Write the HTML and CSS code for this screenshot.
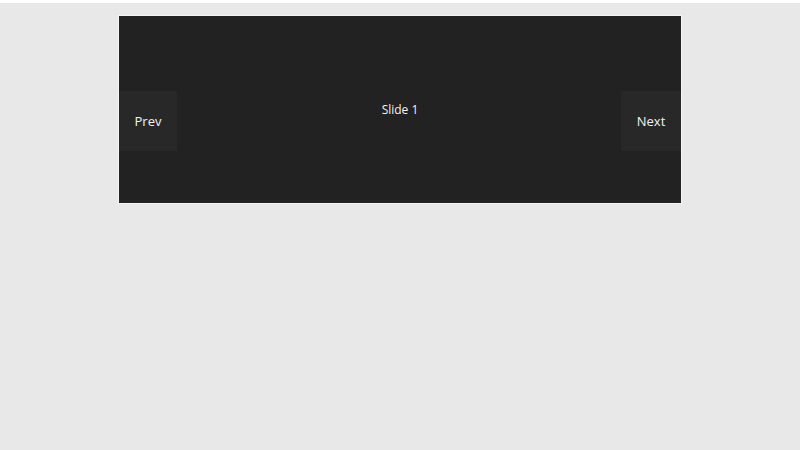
FILE: index.html
```html
<!DOCTYPE html>
<html lang="en">
<head>
<meta charset="utf-8">
<title>Carousel</title>
<link rel="stylesheet" href="styles.css">
</head>
<body>
<div class="topbar"></div>
<main class="page">
  <section class="carousel">
    <div class="slide">Slide 1</div>
    <button class="nav nav-prev" type="button">Prev</button>
    <button class="nav nav-next" type="button">Next</button>
  </section>
</main>
</body>
</html>
```
FILE: styles.css
```css
html, body {
  margin: 0;
  padding: 0;
}

body {
  background: #e8e8e8;
  font-family: "Open Sans", "Liberation Sans", sans-serif;
  height: 450px;
}

.topbar {
  height: 3px;
  background: #ffffff;
}

.page {
  display: flex;
  justify-content: center;
  padding-top: 13px;
}

.carousel {
  position: relative;
  width: 562px;
  height: 187px;
  background: #222222;
  outline: 1px solid #f4f4f4;
}

.slide {
  height: 100%;
  display: flex;
  align-items: center;
  justify-content: center;
  color: #f4f4f4;
  font-size: 12px;
  padding-bottom: 1px;
  box-sizing: border-box;
}

.nav {
  position: absolute;
  top: 75px;
  width: 58px;
  height: 60px;
  border: 0;
  padding: 0;
  background: #282828;
  color: #f2f2f2;
  font-family: "Open Sans", "Liberation Sans", sans-serif;
  font-size: 13px;
  cursor: pointer;
}

.nav-prev {
  left: 0;
}

.nav-next {
  right: 0;
  width: 60px;
}
```
